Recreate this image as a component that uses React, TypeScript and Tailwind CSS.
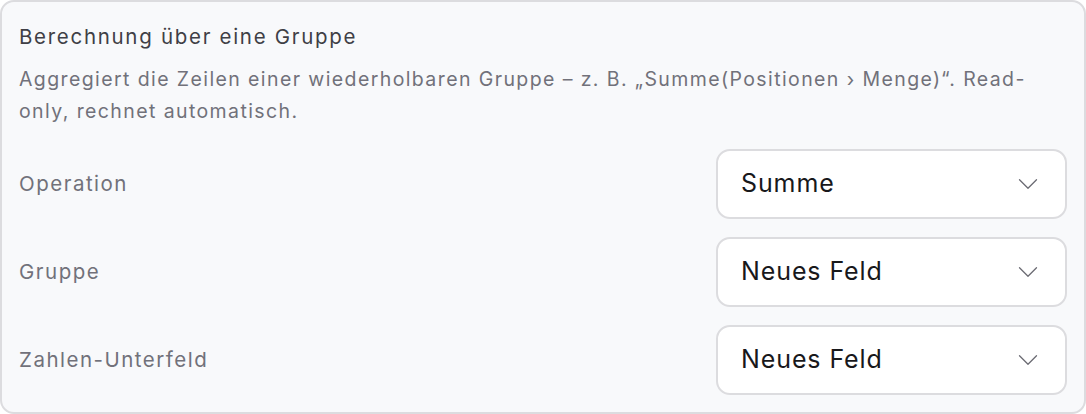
import { ChevronDown } from 'lucide-react';

const rows = [
  { label: 'Operation', value: 'Summe' },
  { label: 'Gruppe', value: 'Neues Feld' },
  { label: 'Zahlen-Unterfeld', value: 'Neues Feld' },
];

function SelectBox({ value }: { value: string }) {
  return (
    <div className="flex h-[70px] w-[351px] items-center justify-between rounded-[14px] border-2 border-[#dcdcdf] bg-white pl-[23px] pr-[20px]">
      <span className="text-[25px] tracking-[0.9px] text-[#18181b]">{value}</span>
      <ChevronDown className="h-[34px] w-[34px] text-[#6b6b73]" strokeWidth={0.9} />
    </div>
  );
}

export default function App() {
  return (
    <div className="font-['Inter',sans-serif]">
      <div className="flex h-[414px] w-[1086px] flex-col rounded-[14px] border-2 border-[#dcdcdf] bg-[#f8f9fb] px-[17px] pt-[19px]">
        <h3 className="text-[20.5px] leading-[32px] tracking-[1.7px] text-[#3f3f46]">Berechnung über eine Gruppe</h3>
        <p className="mt-[10px] max-w-[1036px] text-[19.5px] leading-[32px] tracking-[1.4px] text-[#71717a]">
          Aggregiert die Zeilen einer wiederholbaren Gruppe – z. B. „Summe(Positionen › Menge)“. Read-only, rechnet automatisch.
        </p>
        <div className="mt-[22px] flex flex-col gap-[18px]">
          {rows.map((r) => (
            <div key={r.label} className="flex items-center justify-between">
              <span className="text-[20.5px] tracking-[1.5px] text-[#71717a]">{r.label}</span>
              <SelectBox value={r.value} />
            </div>
          ))}
        </div>
      </div>
    </div>
  );
}
